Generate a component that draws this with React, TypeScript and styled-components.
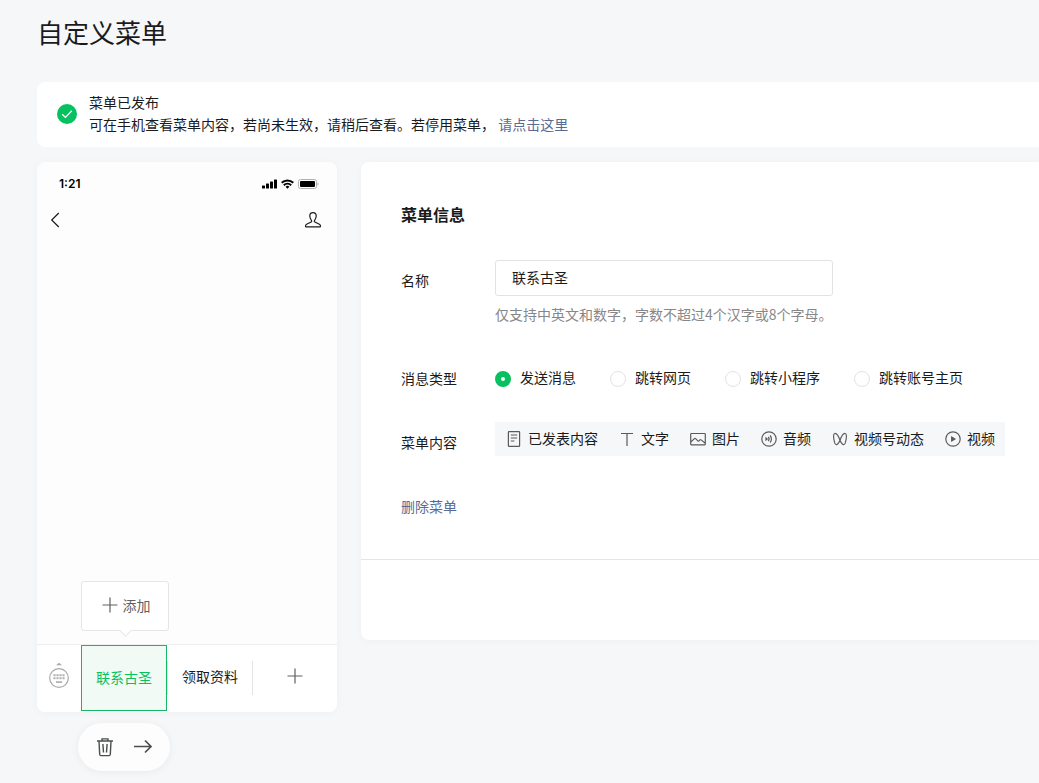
import React, { useState } from "react";
import styled, { createGlobalStyle, css } from "styled-components";

const GlobalStyle = createGlobalStyle`
  * { box-sizing: border-box; }
  body {
    margin: 0;
    background: #f6f7f9;
    color: #1a1b1c;
    font-family: "Noto Sans CJK SC", sans-serif;
    font-size: 14px;
    line-height: 22px;
  }
  button, input { font: inherit; color: inherit; margin: 0; }
  svg { display: block; flex: none; }
`;

const Page = styled.main`
  padding: 11px 0 12px 37px;
`;

const Title = styled.h1`
  margin: 0 0 29px;
  font-size: 26px;
  line-height: 42px;
  font-weight: 400;
`;

const Card = styled.section`
  background: #fff;
  border-radius: 8px 0 0 8px;
  box-shadow: 0 1px 10px rgba(0, 0, 0, 0.03);
`;

const Notice = styled(Card)`
  display: flex;
  align-items: flex-start;
  gap: 12px;
  padding: 9px 20px 12px;
  margin-bottom: 15px;
  box-shadow: none;

  > svg { margin-top: 13px; }
`;

const NoticeText = styled.p`
  margin: 0;
`;

const Link = styled.a`
  color: #576b95;
  text-decoration: none;
`;

const Columns = styled.div`
  display: flex;
  align-items: flex-start;
  gap: 24px;
`;

const PhoneColumn = styled.div`
  flex: none;
  width: 300px;
`;

const Phone = styled.div`
  display: flex;
  flex-direction: column;
  height: 550px;
  border-radius: 8px;
  background: #fdfdfd;
  box-shadow: 0 1px 10px rgba(0, 0, 0, 0.03);
`;

const StatusBar = styled.div`
  display: flex;
  justify-content: space-between;
  align-items: center;
  height: 43px;
  padding: 0 18px 0 22px;
  font-family: Inter, sans-serif;
  font-size: 12px;
  font-weight: 600;
  color: #000;
`;

const StatusIcons = styled.div`
  display: flex;
  align-items: center;
  gap: 4px;
`;

const PhoneNav = styled.div`
  display: flex;
  justify-content: space-between;
  align-items: center;
  height: 30px;
  padding: 0 15px 0 13px;
`;

const MenuBar = styled.div`
  display: grid;
  grid-template-columns: 44px 86px 1fr 1fr;
  height: 68px;
  margin-top: auto;
  border-top: 1px solid #efefef;
  border-radius: 0 0 8px 8px;
  background: #fff;
`;

const KeyboardCell = styled.div`
  display: flex;
  justify-content: center;
  align-items: center;
  padding-bottom: 7px;
`;

const MenuCell = styled.div`
  position: relative;
  display: flex;
  align-items: flex-start;

  & + &::before {
    content: "";
    width: 1px;
    height: 34px;
    margin-top: 16px;
    background: #e4e4e6;
  }
`;

const MenuButton = styled.button<{ $active?: boolean }>`
  flex: 1;
  display: flex;
  justify-content: center;
  align-items: center;
  height: 66px;
  padding: 0 0 4px;
  border: 0;
  background: none;
  cursor: pointer;

  svg { color: #5f6062; }

  ${(p) =>
    p.$active &&
    css`
      padding: 0 0 2px;
      border: 1px solid #14b866;
      background: #f2faf6;
      color: #07c160;
    `}
`;

const SubMenu = styled.div`
  position: absolute;
  left: 0;
  bottom: 81px;
  width: 88px;
  height: 50px;
  border: 1px solid #e4e5e7;
  border-radius: 3px;
  background: #fff;

  &::after {
    content: "";
    position: absolute;
    left: 39px;
    bottom: -5px;
    width: 8px;
    height: 8px;
    border: solid #e4e5e7;
    border-width: 0 1px 1px 0;
    background: #fff;
    transform: rotate(45deg);
  }
`;

const AddButton = styled.button`
  display: flex;
  justify-content: center;
  align-items: center;
  gap: 5px;
  width: 100%;
  height: 100%;
  padding: 0 0 2px 2px;
  border: 0;
  background: none;
  color: #5f6062;
  cursor: pointer;
`;

const Tools = styled.div`
  display: inline-flex;
  gap: 18px;
  margin: 11px 0 0 41px;
  padding: 14px 17px;
  border-radius: 24px;
  background: #fdfdfd;
  box-shadow: 0 1px 8px rgba(0, 0, 0, 0.06);
`;

const ToolButton = styled.button`
  padding: 0;
  border: 0;
  background: none;
  color: #4c4d4f;
  cursor: pointer;
`;

const Editor = styled(Card)`
  flex: 1;
  min-width: 0;
`;

const Form = styled.form`
  padding: 41px 34px 42px 40px;
`;

const Heading = styled.h2`
  margin: 0 0 35px;
  font-size: 16px;
  line-height: 22px;
  font-weight: 700;
`;

const Row = styled.div`
  display: flex;
  align-items: flex-start;
  margin-bottom: 33px;
`;

const RowLabel = styled.label`
  flex: none;
  width: 94px;
  padding-top: 9px;
`;

const NameInput = styled.input`
  display: block;
  width: 338px;
  max-width: 100%;
  height: 36px;
  padding: 0 16px 2px;
  border: 1px solid #e2e3e5;
  border-radius: 3px;
  background: #fff;
  outline: 0;
`;

const Hint = styled.p`
  margin: 7px 0 0;
  color: #86878a;
`;

const Radios = styled.div`
  display: flex;
  gap: 34px;
  padding-top: 8px;
`;

const RadioLabel = styled.label`
  display: flex;
  align-items: flex-start;
  gap: 9px;
  white-space: nowrap;
`;

const Radio = styled.input`
  && { margin-top: 5px; }
  appearance: none;
  width: 16px;
  height: 16px;
  border: 1px solid #e2e3e5;
  border-radius: 50%;
  background: #fff;

  &:checked {
    border: 6px solid #07c160;
  }
`;

const ContentBar = styled.div`
  display: flex;
  gap: 21px;
  padding: 0 10px 0 11px;
  background: #f6f7f9;
`;

const ContentButton = styled.button`
  display: flex;
  align-items: center;
  gap: 6px;
  height: 34px;
  padding: 0 0 2px;
  border: 0;
  background: none;
  white-space: nowrap;
  cursor: pointer;

  svg {
    margin-top: 2px;
    color: #595a5c;
  }
`;

const DeleteLink = styled(Link)`
  display: inline-block;
  vertical-align: top;
  padding-top: 6px;
`;

const Footer = styled.footer`
  height: 81px;
  border-top: 1px solid #e4e5e7;
`;

const Stroke = ({
  size = 16,
  width = 1,
  children,
}: {
  size?: number;
  width?: number;
  children: React.ReactNode;
}) => (
  <svg width={size} height={size} viewBox={`0 0 ${size} ${size}`} fill="none" stroke="currentColor" strokeWidth={width} aria-hidden="true">
    {children}
  </svg>
);

const SuccessIcon = () => (
  <svg width="20" height="20" viewBox="0 0 20 20" aria-hidden="true">
    <circle cx="10" cy="10" r="10" fill="#07c160" />
    <path d="M5.2 10.2l3.2 3.2 6.4-6.6" fill="none" stroke="#fff" strokeWidth="1.3" />
  </svg>
);

const SignalIcon = () => (
  <svg width="15" height="10" viewBox="0 0 15 10" aria-hidden="true">
    <rect x="0" y="6.4" width="3" height="3.1" rx=".6" />
    <rect x="4" y="4.6" width="3" height="4.9" rx=".6" />
    <rect x="8" y="2.6" width="3" height="6.9" rx=".6" />
    <rect x="12" y="0.4" width="3" height="9.1" rx=".6" />
  </svg>
);

const WifiIcon = () => (
  <svg width="13" height="10" viewBox="0 0 13 10" fill="none" stroke="#000" strokeWidth="1.9" aria-hidden="true">
    <path d="M.7 3.800a8.300 8.300 0 0 1 11.600 0M2.800 6.200a5.300 5.300 0 0 1 7.400 0" />
    <path d="M4.600 7.800a2.700 2.700 0 0 1 3.800 0L6.500 9.800z" fill="#000" stroke="none" />
  </svg>
);

const BatteryIcon = () => (
  <svg width="21" height="10" viewBox="0 0 21 10" aria-hidden="true">
    <rect x=".5" y=".5" width="18" height="9" rx="2" fill="none" stroke="#b0b0b0" />
    <rect x="2" y="2" width="15" height="6" rx="1" />
    <path d="M19.5 3.2v3.6c1.4-.6 1.4-3 0-3.6z" fill="#b0b0b0" />
  </svg>
);

const BackIcon = () => (
  <Stroke width={1.2}>
    <path d="M8.8 1L1.7 8l7.1 7" />
  </Stroke>
);

const PersonIcon = () => (
  <Stroke size={18} width={1.2}>
    <path d="M9 1.700c2 0 3.200 1.300 3.200 3.400 0 1.900-.7 3.200-1.600 4.200-.4.5-.4 1.400.2 1.700l4.600 2.200c.8.4 1.100 1.200 1.100 2.100 0 .4-.2.600-.6.600H2.100c-.4 0-.6-.2-.6-.6 0-.9.3-1.700 1.100-2.100l4.600-2.200c.6-.3.6-1.200.2-1.700-.9-1-1.600-2.300-1.600-4.200C5.800 3 7 1.700 9 1.700z" />
  </Stroke>
);

const KeyboardIcon = () => (
  <svg width="20" height="27" viewBox="0 0 20 27" aria-hidden="true">
    <path d="M10 .8l3 2.400H7z" fill="#a9a9a9" />
    <circle cx="10" cy="16" r="9.300" fill="none" stroke="#a9a9a9" strokeWidth="1.200" />
    <g fill="#b4b4b4">
      {[4.4, 7.4, 10.4, 13.4].map((x) => (
        <React.Fragment key={x}>
          <rect x={x} y="12.200" width="2.200" height="2" />
          <rect x={x} y="15.200" width="2.200" height="2" />
        </React.Fragment>
      ))}
      <rect x="7" y="19.200" width="6" height="1.800" />
    </g>
  </svg>
);

const PlusIcon = () => (
  <Stroke width={1.2}>
    <path d="M8 .5v15M.5 8h15" />
  </Stroke>
);

const TrashIcon = () => (
  <Stroke size={20} width={1.4}>
    <path d="M2 4h16M7 3.500V1.900h6v1.600M4 4.200l.7 13.200c.1.800.5 1.200 1.200 1.200h8.200c.7 0 1.100-.4 1.200-1.200L16 4.200M7.900 7l.6 8.500M12.100 7l-.6 8.500" />
  </Stroke>
);

const ArrowIcon = () => (
  <Stroke size={20} width={1.7}>
    <path d="M1 9.500h17M12 3.500l6 6-6 6" />
  </Stroke>
);

const contentTypes = [
  {
    label: "已发表内容",
    icon: <path d="M3 .7h10c.3 0 .6.300.6.600v13.400c0 .3-.3.600-.6.600H3c-.3 0-.6-.3-.6-.600V1.300c0-.3.3-.600.6-.600zM4.800 4h6.400M4.800 7h6.400M4.800 10h3.600" />,
  },
  { label: "文字", icon: <path d="M2 2.500h12M8 2.500v12.500" /> },
  {
    label: "图片",
    icon: <path d="M1.400 2.500h13.200c.4 0 .7.300.7.700v9.900c0 .4-.3.700-.7.700H1.400c-.4 0-.7-.3-.7-.7V3.200c0-.4.3-.7.7-.7zM.8 11.200l3.600-3.600c.4-.4.800-.4 1.200 0l2.200 2.200c.4.400.8.400 1.200 0l.9-.9c.4-.4.8-.4 1.200 0l3.900 3" />,
  },
  {
    label: "音频",
    icon: (
      <>
        <circle cx="8" cy="8" r="7.200" />
        <path d="M5 7v2l1.200-1z" fill="currentColor" />
        <path d="M7.200 6a2.900 2.900 0 0 1 0 4M9 4.500a5 5 0 0 1 0 7" />
      </>
    ),
  },
  {
    label: "视频号动态",
    icon: <path d="M8 9.300C6.600 5.500 4.500 2.100 2.800 2.500 1.300 2.900 1.400 6 2 9c.5 2.600 1.200 4.700 2.400 4.700 1.500 0 2.700-2.400 3.600-4.400zM8 9.300c1.400-3.800 3.500-7.200 5.200-6.800 1.500.4 1.400 3.500.8 6.500-.5 2.600-1.200 4.700-2.400 4.700-1.500 0-2.700-2.400-3.600-4.400z" />,
  },
  {
    label: "视频",
    icon: (
      <>
        <circle cx="8" cy="8" r="7.200" />
        <path d="M6.700 6v4l3.200-2z" fill="currentColor" />
      </>
    ),
  },
];

const messageTypes = ["发送消息", "跳转网页", "跳转小程序", "跳转账号主页"];

export default function App() {
  const [name, setName] = useState("联系古圣");
  const [type, setType] = useState(messageTypes[0]);

  return (
    <>
      <GlobalStyle />
      <Page>
        <Title>自定义菜单</Title>

        <Notice>
          <SuccessIcon />
          <div>
            <NoticeText>菜单已发布</NoticeText>
            <NoticeText>
              可在手机查看菜单内容，若尚未生效，请稍后查看。若停用菜单， <Link href="#disable">请点击这里</Link>
            </NoticeText>
          </div>
        </Notice>

        <Columns>
          <PhoneColumn>
            <Phone>
              <StatusBar>
                <span>1:21</span>
                <StatusIcons>
                  <SignalIcon />
                  <WifiIcon />
                  <BatteryIcon />
                </StatusIcons>
              </StatusBar>
              <PhoneNav>
                <BackIcon />
                <PersonIcon />
              </PhoneNav>
              <MenuBar>
                <KeyboardCell>
                  <KeyboardIcon />
                </KeyboardCell>
                <MenuCell>
                  <MenuButton type="button" $active>
                    {name}
                  </MenuButton>
                  <SubMenu>
                    <AddButton type="button">
                      <PlusIcon />
                      添加
                    </AddButton>
                  </SubMenu>
                </MenuCell>
                <MenuCell>
                  <MenuButton type="button">领取资料</MenuButton>
                </MenuCell>
                <MenuCell>
                  <MenuButton type="button" aria-label="添加菜单">
                    <PlusIcon />
                  </MenuButton>
                </MenuCell>
              </MenuBar>
            </Phone>
            <Tools>
              <ToolButton type="button" aria-label="删除">
                <TrashIcon />
              </ToolButton>
              <ToolButton type="button" aria-label="右移">
                <ArrowIcon />
              </ToolButton>
            </Tools>
          </PhoneColumn>

          <Editor>
            <Form onSubmit={(e) => e.preventDefault()}>
              <Heading>菜单信息</Heading>
              <Row>
                <RowLabel htmlFor="menu-name">名称</RowLabel>
                <div>
                  <NameInput id="menu-name" type="text" value={name} onChange={(e) => setName(e.target.value)} />
                  <Hint>仅支持中英文和数字，字数不超过4个汉字或8个字母。</Hint>
                </div>
              </Row>
              <Row role="radiogroup" aria-labelledby="type-label">
                <RowLabel as="span" id="type-label">消息类型</RowLabel>
                <Radios>
                  {messageTypes.map((t) => (
                    <RadioLabel key={t}>
                      <Radio type="radio" name="message-type" checked={t === type} onChange={() => setType(t)} />
                      {t}
                    </RadioLabel>
                  ))}
                </Radios>
              </Row>
              <Row role="group" aria-labelledby="content-label">
                <RowLabel as="span" id="content-label">菜单内容</RowLabel>
                <ContentBar>
                  {contentTypes.map((c) => (
                    <ContentButton key={c.label} type="button">
                      <Stroke width={1.2}>{c.icon}</Stroke>
                      {c.label}
                    </ContentButton>
                  ))}
                </ContentBar>
              </Row>
              <DeleteLink href="#delete">删除菜单</DeleteLink>
            </Form>
            <Footer />
          </Editor>
        </Columns>
      </Page>
    </>
  );
}
